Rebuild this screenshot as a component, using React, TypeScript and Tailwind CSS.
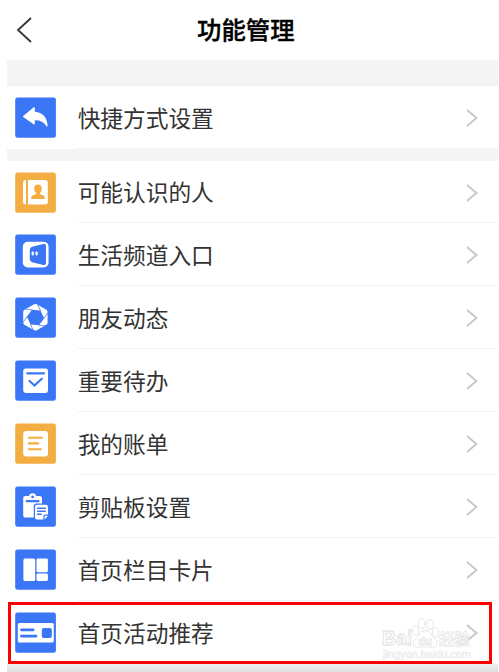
import type { ReactNode } from "react"

interface FeatureItem {
  label: string
  color: "blue" | "amber"
  icon: ReactNode
}

const shortcut: FeatureItem = {
  label: "快捷方式设置",
  color: "blue",
  icon: (
    <path
      d="M8.2 19 L18.8 10.2 Q19.8 9.6 19.8 10.8 V14.8 C27.5 15.3 32.3 20.5 32.6 28.8 Q32.4 30.6 31.4 29 C28.8 24.9 25 23 19.8 23.2 V26.6 Q19.8 28 18.6 27.2 L8.2 19.9 Q7.6 19.4 8.2 19 Z"
      fill="#fff"
    />
  ),
}

const features: FeatureItem[] = [
  {
    label: "可能认识的人",
    color: "amber",
    icon: (
      <>
        <path d="M10.4 8 H11 V32.5 H10.4 Q8 32.5 8 30 V10.5 Q8 8 10.4 8 Z" fill="#fff" />
        <path d="M13 8 H30.2 Q32.8 8 32.8 10.5 V30 Q32.8 32.5 30.2 32.5 H13 Z" fill="#fff" />
        <path
          d="M23 12.6 C20.5 12.6 19.2 14.2 19.2 16.4 C19.2 18.5 20 19.9 21.1 20.9 V22 L17.5 23.4 Q16.3 24 16.3 25.3 V26.9 H29.7 V25.3 Q29.7 24 28.5 23.4 L24.9 22 V20.9 C26 19.9 26.8 18.5 26.8 16.4 C26.8 14.2 25.5 12.6 23 12.6 Z"
          fill="#f3ad42"
        />
      </>
    ),
  },
  {
    label: "生活频道入口",
    color: "blue",
    icon: (
      <>
        <rect x="7.8" y="7.8" width="25.8" height="25.6" rx="5" fill="#fff" />
        <path
          d="M17 12.8 L28.4 9.9 Q31 9.5 31 12.2 V28.8 Q31 31.5 28.4 31 L17 28.2 Q14.8 27.4 14.8 25 V16 Q14.8 13.5 17 12.8 Z"
          fill="#3b76f6"
        />
        <rect x="16.6" y="17.6" width="2.2" height="3.8" rx="0.8" fill="#fff" />
        <rect x="20.5" y="17.6" width="2.2" height="3.8" rx="0.8" fill="#fff" />
      </>
    ),
  },
  {
    label: "朋友动态",
    color: "blue",
    icon: (
      <>
        <path
          d="M19.2 7.3 Q20.5 6.7 21.8 7.3 L31.4 12.7 Q32.6 13.5 32.6 14.9 V25.6 Q32.6 27 31.4 27.8 L21.8 33.2 Q20.5 33.8 19.2 33.2 L9.4 27.8 Q8.2 27 8.2 25.6 V14.9 Q8.2 13.5 9.4 12.7 Z"
          fill="#fff"
        />
        <path
          d="M25.4 13.5 L29.1 21.2 L24.1 28.3 L15.6 27.5 L11.9 19.8 L16.9 12.7 Z"
          fill="#3b76f6"
        />
        {[0, 60, 120, 180, 240, 300].map((angle) => (
          <path
            key={angle}
            d="M8.6 12 L17.5 12.8"
            transform={`rotate(${angle} 20.5 20.5)`}
            stroke="#3b76f6"
            strokeWidth="0.7"
          />
        ))}
      </>
    ),
  },
  {
    label: "重要待办",
    color: "blue",
    icon: (
      <>
        <rect x="8.2" y="8.6" width="24.8" height="24.4" rx="2.4" fill="#fff" />
        <path d="M12.3 13.3 H29" stroke="#3b76f6" strokeWidth="2.3" strokeLinecap="round" />
        <path
          d="M14.5 21 L19.5 25.6 L26.8 18.7"
          stroke="#3b76f6"
          strokeWidth="2.2"
          strokeLinecap="round"
          fill="none"
        />
      </>
    ),
  },
  {
    label: "我的账单",
    color: "amber",
    icon: (
      <>
        <rect x="8.2" y="8" width="24.8" height="25.6" rx="3" fill="#fff" />
        <path
          d="M13.8 14.7 H26.8 M13.8 20.4 H23.2 M13.8 26.2 H25.8"
          stroke="#f3ad42"
          strokeWidth="2.1"
          strokeLinecap="round"
        />
      </>
    ),
  },
  {
    label: "剪贴板设置",
    color: "blue",
    icon: (
      <>
        <path
          d="M10.4 10 H14 Q14.7 7.2 17.6 7.2 Q20.5 7.2 21.2 10 H24.8 Q27 10 27 12.2 V17.6 H21.4 Q18.8 17.6 18.8 20.2 V31.6 H10.4 Q8.2 31.6 8.2 29.4 V12.2 Q8.2 10 10.4 10 Z"
          fill="#fff"
        />
        <circle cx="17.6" cy="10.9" r="1.4" fill="#3b76f6" />
        <path d="M11.8 15.2 H23.4" stroke="#3b76f6" strokeWidth="2.2" strokeLinecap="round" />
        <path
          d="M22 18.8 H31 Q33 18.8 33 20.8 V28.4 H30 Q28.4 28.4 28.4 30 V33.6 H22 Q20 33.6 20 31.6 V20.8 Q20 18.8 22 18.8 Z"
          fill="#fff"
        />
        <path d="M29.6 33.4 V30.5 Q29.6 29.7 30.4 29.7 H33 Z" fill="#fff" />
        <path
          d="M22.6 22.2 H30.4 M22.6 25.2 H30.4 M22.6 28.3 H26.2"
          stroke="#3b76f6"
          strokeWidth="1.4"
          strokeLinecap="round"
        />
      </>
    ),
  },
  {
    label: "首页栏目卡片",
    color: "blue",
    icon: (
      <>
        <rect x="8.4" y="9.6" width="11.8" height="22.4" rx="1.6" fill="#fff" />
        <rect x="21.5" y="9.6" width="11.4" height="13.6" rx="1.4" fill="#fff" />
        <rect x="21.5" y="24.6" width="11.4" height="7.4" rx="1.4" fill="#fff" />
      </>
    ),
  },
]

const recommend: FeatureItem = {
  label: "首页活动推荐",
  color: "blue",
  icon: (
    <>
      <rect x="2.8" y="11" width="36" height="19.6" rx="1.6" fill="#fff" />
      <path
        d="M6.4 17.8 H18.2 M6.4 24.1 H21"
        stroke="#3b76f6"
        strokeWidth="2.8"
        strokeLinecap="round"
      />
      <rect x="26.8" y="16" width="10" height="10" rx="2" fill="#3b76f6" />
    </>
  ),
}

function FeatureRow({ item, className }: { item: FeatureItem; className: string }) {
  return (
    <div className={`flex items-center pl-2 ${className}`}>
      <svg viewBox="0 0 41 41" className="h-[41px] w-[41px] shrink-0" fill="none">
        <rect
          x="0.2"
          y="0.4"
          width="40.7"
          height="40.4"
          rx="2.4"
          fill={item.color === "blue" ? "#3b76f6" : "#f3ad42"}
        />
        {item.icon}
      </svg>
      <div className="ml-[21px] flex h-full flex-1 items-center justify-between border-b border-[#f3f3f3] pt-[2px] pr-[20px]">
        <span className="pl-[0.7px] text-[22.7px] leading-none text-[#333]">{item.label}</span>
        <svg viewBox="0 0 12 18" className="h-[18px] w-[12px]" fill="none">
          <path d="M1 1 L10.4 9 L1 17" stroke="#c8c8c8" strokeWidth="1.9" />
        </svg>
      </div>
    </div>
  )
}

function Watermark() {
  return (
    <svg
      viewBox="0 0 92 46"
      className="absolute top-[15px] left-[375px] h-[46px] w-[92px]"
      fill="#fff"
      stroke="#dedede"
      strokeWidth="0.8"
    >
      <text
        x="0"
        y="29.3"
        fontSize="20"
        fontWeight="700"
        fontFamily="Liberation Sans, sans-serif"
        textLength="30"
        lengthAdjust="spacingAndGlyphs"
      >
        Bai
      </text>
      <ellipse cx="33.5" cy="14.5" rx="3.2" ry="4.5" />
      <ellipse cx="39.5" cy="7.5" rx="3.4" ry="5" />
      <ellipse cx="48" cy="8.5" rx="3.4" ry="5" />
      <ellipse cx="53.5" cy="16.5" rx="3.2" ry="4.5" />
      <path d="M43 14.5 C37.5 14.5 37 20 33.5 23 C29.5 26.5 31.5 31.5 36 31.3 C40.5 30.6 46 30.6 50.5 31.3 C55 31.5 57 26.5 53 23 C49.5 20 48.5 14.5 43 14.5 Z" />
      <text
        x="36"
        y="29"
        fontSize="11.5"
        fontWeight="700"
        fontFamily="Liberation Sans, sans-serif"
        strokeWidth="0.6"
      >
        du
      </text>
      <text
        x="57"
        y="28.5"
        fontSize="15.5"
        fontWeight="700"
        fontFamily="Noto Sans CJK SC, sans-serif"
        strokeWidth="0.6"
      >
        经验
      </text>
      <text
        x="1"
        y="41.7"
        fontSize="10"
        fontFamily="Liberation Sans, sans-serif"
        fill="#f0f0f0"
        stroke="#ebebeb"
        strokeWidth="0.4"
        textLength="88"
        lengthAdjust="spacingAndGlyphs"
      >
        jingyan.baidu.com
      </text>
    </svg>
  )
}

export default function App() {
  return (
    <div className="flex h-[672px] w-[499px] flex-col overflow-hidden bg-white pr-px pl-[7px] font-['Noto_Sans_CJK_SC',sans-serif]">
      <header className="flex h-[60px] shrink-0 items-center">
        <svg viewBox="0 0 16 26" className="ml-[9px] h-[26px] w-[16px]" fill="none">
          <path d="M15 1 L2 13 L15 25" stroke="#333" strokeWidth="1.8" />
        </svg>
        <h1 className="ml-[165px] pb-px text-[24.4px] leading-none font-medium text-black [-webkit-text-stroke:0.35px_black]">
          功能管理
        </h1>
      </header>

      <div className="h-[26px] shrink-0 bg-[#f4f4f4]" />
      <FeatureRow item={shortcut} className="h-[63px] shrink-0" />
      <div className="h-[12px] shrink-0 bg-[#f4f4f4]" />

      <FeatureRow item={features[0]} className="h-[62px] shrink-0" />
      {features.slice(1).map((item) => (
        <FeatureRow key={item.label} item={item} className="h-[63px] shrink-0" />
      ))}

      <div className="relative h-[63px] shrink-0">
        <FeatureRow item={recommend} className="h-full" />
        <Watermark />
        <div className="absolute top-[1px] left-[1px] h-[62px] w-[484px] border-[3px] border-[#fe0000]" />
      </div>
      <div className="flex-1 bg-linear-to-b from-[#efefef] to-[#dedede]" />
    </div>
  )
}
